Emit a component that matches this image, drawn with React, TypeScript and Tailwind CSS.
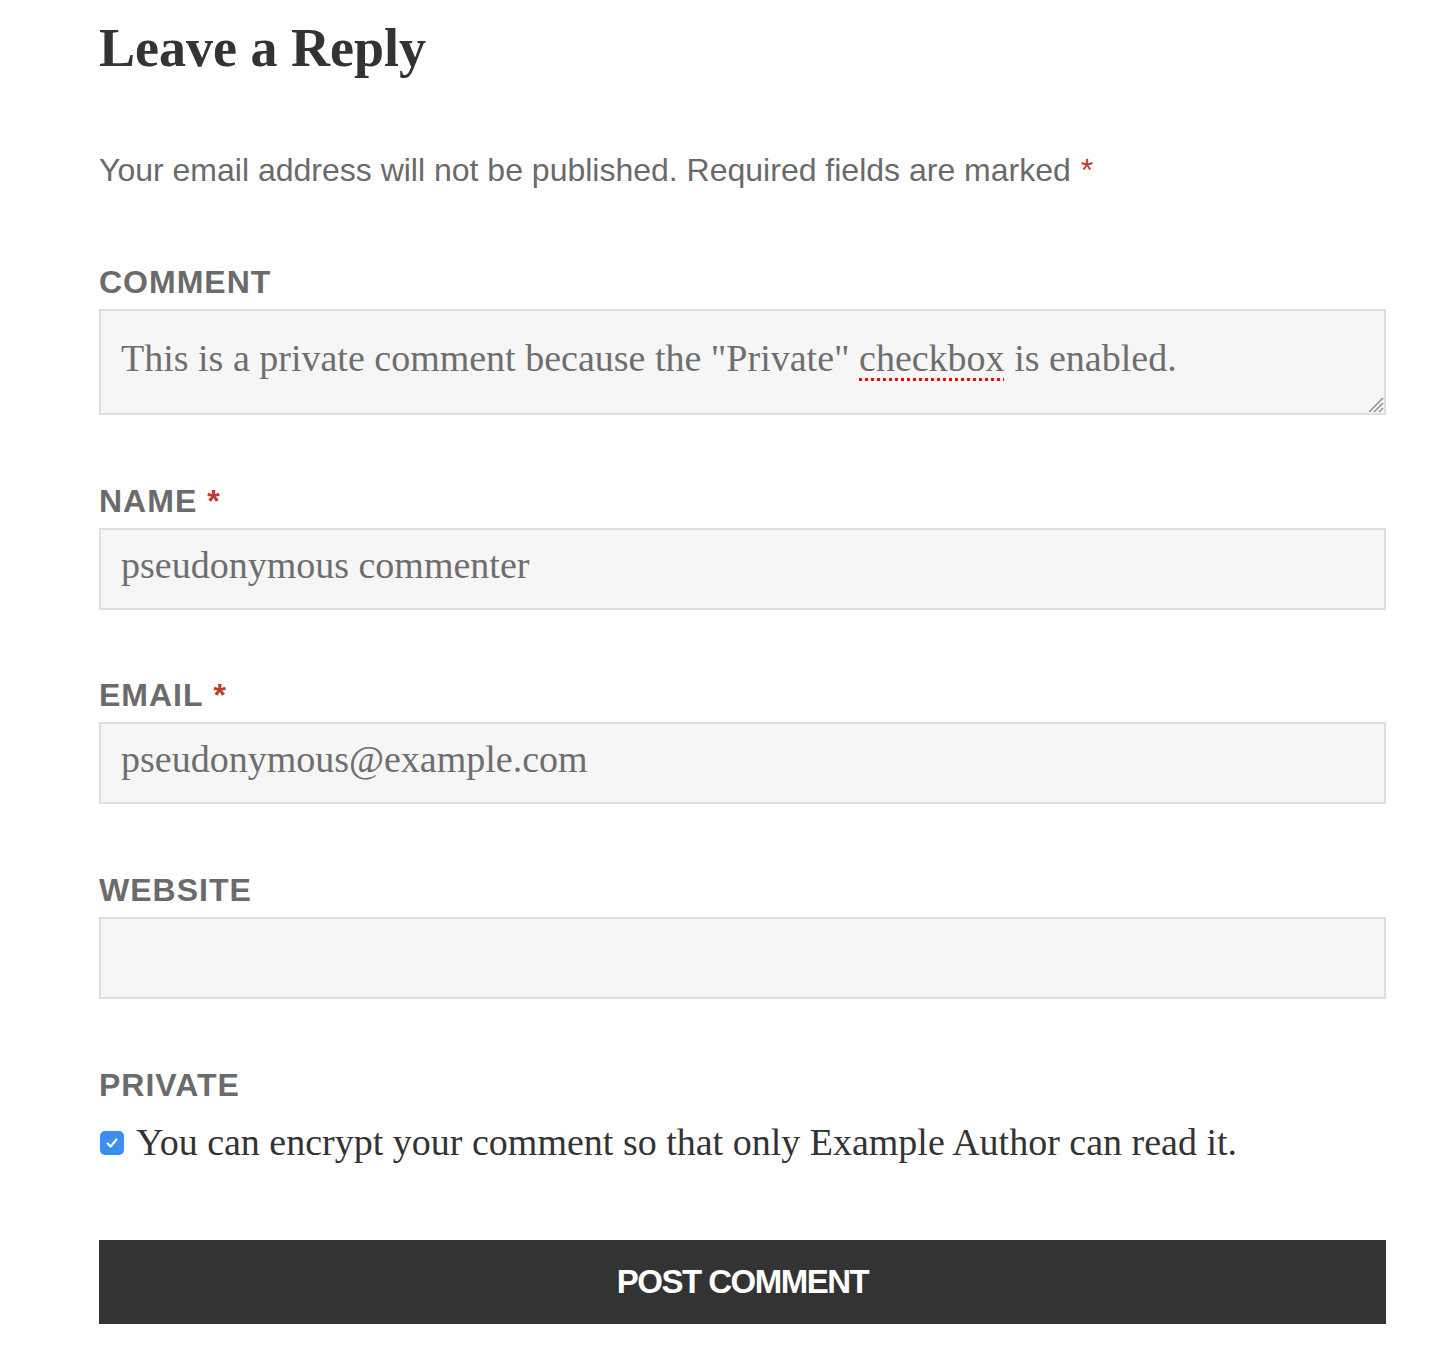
import type { ReactNode } from "react";

const SANS = "font-['Liberation_Sans',Arial,sans-serif]";
const SERIF = "font-['Liberation_Serif','Times_New_Roman',serif]";

function Required() {
  return <span className="ml-[10px] text-[#c0392b]">*</span>;
}

function FieldLabel({ children }: { children: ReactNode }) {
  return (
    <label
      className={`${SANS} block text-[32px] leading-[48px] font-bold uppercase tracking-[1px] text-[#6b6b6b]`}
    >
      {children}
    </label>
  );
}

function TextField({ value }: { value?: string }) {
  return (
    <input
      type="text"
      defaultValue={value}
      spellCheck={false}
      className={`${SERIF} mt-[3px] block h-[82px] w-full border-2 border-[#dedede] bg-[#f6f6f6] px-[20px] pb-[8px] text-[38px] text-[#6e6e6e] outline-none`}
    />
  );
}

export default function App() {
  return (
    <div className="min-h-[1370px] w-full bg-white">
      <div className="ml-[99px] w-[1287px] pt-[21px]">
        {/* Heading */}
        <h3 className={`${SERIF} text-[54px] leading-[54px] font-bold text-[#333333]`}>
          Leave a Reply
        </h3>

        <p className={`${SANS} mt-[71px] text-[32px] leading-[48px] text-[#6a6a6a]`}>
          Your email address will not be published. Required fields are marked
          <span className="ml-[10px] text-[#c0392b]">*</span>
        </p>

        {/* Comment */}
        <div className="mt-[64px]">
          <FieldLabel>Comment</FieldLabel>
          <div className="relative mt-[3px] h-[106px] w-full border-2 border-[#dedede] bg-[#f6f6f6] px-[20px] pt-[19px]">
            <p className={`${SERIF} text-[38px] leading-[57px] text-[#6e6e6e]`}>
              This is a private comment because the "Private"{" "}
              <span className="underline decoration-[#ff0000] decoration-dotted decoration-[3px] underline-offset-[7px]">
                checkbox
              </span>{" "}
              is enabled.
            </p>
            {/* resize grip */}
            <svg
              className="absolute bottom-0 right-0"
              width="20"
              height="20"
              viewBox="0 0 20 20"
            >
              <line x1="19" y1="5" x2="5" y2="19" stroke="#8a8a8a" strokeWidth="1.5" />
              <line x1="19" y1="10" x2="10" y2="19" stroke="#8a8a8a" strokeWidth="1.5" />
              <line x1="19" y1="15" x2="15" y2="19" stroke="#8a8a8a" strokeWidth="1.5" />
            </svg>
          </div>
        </div>

        {/* Name */}
        <div className="mt-[62px]">
          <FieldLabel>
            Name
            <Required />
          </FieldLabel>
          <TextField value="pseudonymous commenter" />
        </div>

        {/* Email */}
        <div className="mt-[61px]">
          <FieldLabel>
            Email
            <Required />
          </FieldLabel>
          <TextField value="pseudonymous@example.com" />
        </div>

        {/* Website */}
        <div className="mt-[62px]">
          <FieldLabel>Website</FieldLabel>
          <TextField />
        </div>

        {/* Private */}
        <div className="mt-[62px]">
          <FieldLabel>Private</FieldLabel>
          <div className="mt-[5px] flex items-center">
            <span className="ml-[1px] flex h-[24px] w-[24px] items-center justify-center rounded-[5px] bg-[#3b8ff1]">
              <svg width="16" height="16" viewBox="0 0 16 16" fill="none">
                <path
                  d="M3.5 8.5 L6.6 11.5 L12.5 4.5"
                  stroke="white"
                  strokeWidth="2.2"
                  strokeLinecap="round"
                  strokeLinejoin="round"
                />
              </svg>
            </span>
            <span className={`${SERIF} ml-[12px] text-[38px] leading-[57px] text-[#333333]`}>
              You can encrypt your comment so that only Example Author can read it.
            </span>
          </div>
        </div>

        <button
          className={`${SANS} mt-[69px] flex h-[84px] w-full items-center justify-center bg-[#333333] text-[33px] font-bold tracking-[-1.5px] text-white`}
        >
          POST COMMENT
        </button>
      </div>
    </div>
  );
}
